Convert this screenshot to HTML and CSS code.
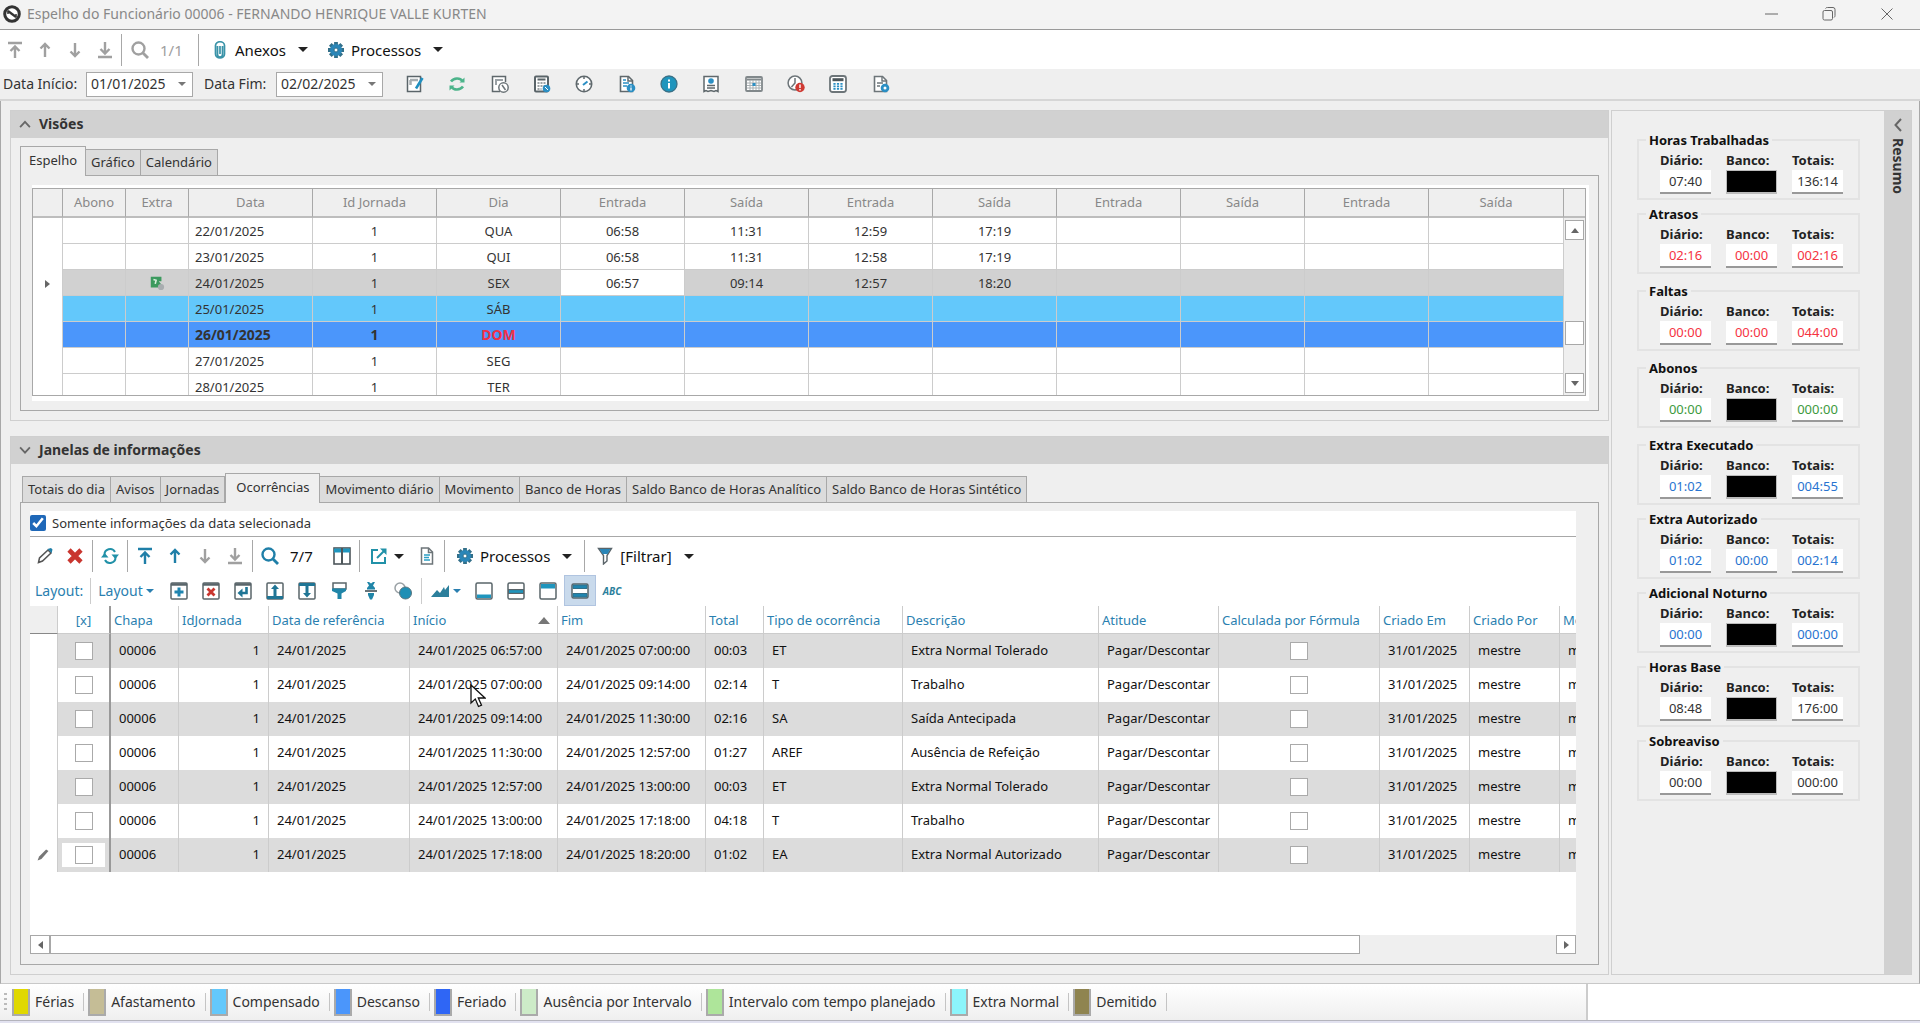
FILE: index.html
```html
<!DOCTYPE html>
<html lang="pt-BR">
<head>
    <meta charset="UTF-8">
    <meta name="viewport" content="width=device-width, initial-scale=1.0">
    <title>Espelho do Funcionário</title>
    <link rel="stylesheet" href="styles.css">
</head>
<body>
    <!-- Icon sprite -->
    <svg class="sprite" aria-hidden="true">
        <symbol id="i-logo" viewBox="0 0 18 18"><circle cx="9" cy="9" r="7.300" fill="#fff" stroke="#333" stroke-width="3"/><path d="M5 6l8 6" stroke="#333" stroke-width="2.200"/><path d="M5 5.500v3.500M13 9v3.500" stroke="#333" stroke-width="1.500"/></symbol>
        <symbol id="i-first" viewBox="0 0 18 18"><path d="M2 2h14M9 17V6M4.500 10L9 5.500l4.500 4.500" fill="none" stroke="currentColor" stroke-width="2.400"/></symbol>
        <symbol id="i-up" viewBox="0 0 18 18"><path d="M9 16V3M4.500 7.500L9 3l4.500 4.500" fill="none" stroke="currentColor" stroke-width="2.400"/></symbol>
        <symbol id="i-down" viewBox="0 0 18 18"><path d="M9 2v13M4.500 10.500L9 15l4.500-4.500" fill="none" stroke="currentColor" stroke-width="2.400"/></symbol>
        <symbol id="i-last" viewBox="0 0 18 18"><path d="M2 16h14M9 1v11M4.500 8L9 12.500 13.500 8" fill="none" stroke="currentColor" stroke-width="2.400"/></symbol>
        <symbol id="i-search" viewBox="0 0 18 18"><circle cx="7.500" cy="7.500" r="6" fill="none" stroke="currentColor" stroke-width="2.400"/><path d="M11.500 11.500L17 17" stroke="currentColor" stroke-width="2.800"/></symbol>
        <symbol id="i-clip" viewBox="0 0 18 18"><path d="M9 5v8M6.500 5v8.500a2.500 2.500 0 0 0 5 0V5M4.500 12V4.500a4.200 3.500 0 0 1 9 0V13a4.500 4 0 0 1-9 0z" fill="none" stroke="#3a93a8" stroke-width="1.700"/></symbol>
        <symbol id="i-gear" viewBox="0 0 18 18"><path d="M9 1v16M1 9h16M3.300 3.300l11.400 11.400M14.700 3.300L3.300 14.700" stroke="#33708a" stroke-width="3.800"/><circle cx="9" cy="9" r="6" fill="#2a86b8"/><circle cx="9" cy="9" r="2" fill="#fff" stroke="#33708a"/></symbol>
        <symbol id="i-note" viewBox="0 0 18 18"><path d="M1.500 1.500h13v15h-13z" fill="#fff" stroke="#5a6469" stroke-width="1.500"/><path d="M4 5h8M4.500 5v5" stroke="#a5acb0" stroke-width="2.500"/><path d="M16.500 3L10 13.500" stroke="#1f8fc0" stroke-width="2.600"/></symbol>
        <symbol id="i-sync" viewBox="0 0 18 18"><path d="M3 6.500c3-4 9-4 11.500-.5M15 11.500c-3 4-9 4-11.500.5" fill="none" stroke="#4db48b" stroke-width="2.600"/><path d="M16.500 2.500v5h-5zM1.500 15.500v-5h5z" fill="#4db48b"/></symbol>
        <symbol id="i-docclock" viewBox="0 0 18 18"><path d="M9 16.500H1.500v-15h13V7" fill="#fff" stroke="#5f686c" stroke-width="1.500"/><path d="M4 5h8M5 5v5" stroke="#9aa1a5" stroke-width="2"/><circle cx="12.500" cy="12.500" r="4.700" fill="#fff" stroke="#6d7579" stroke-width="1.500"/><path d="M11 10l3.500 5" stroke="#6d7579" stroke-width="1.500"/></symbol>
        <symbol id="i-calcsmall" viewBox="0 0 18 18"><rect x="2" y="1.500" width="13" height="15" rx="1" fill="#fff" stroke="#5a6469" stroke-width="2"/><path d="M4.500 4.500h8" stroke="#5a6469" stroke-width="2"/><path d="M4.500 8h8M4.500 11h8M4.500 14h4" stroke="#7d8589" stroke-width="1.300" stroke-dasharray="2 1"/><circle cx="13.500" cy="13.500" r="3.800" fill="#2b8fc4"/><path d="M12 12l3 3" stroke="#fff"/></symbol>
        <symbol id="i-clock" viewBox="0 0 18 18"><circle cx="9" cy="9" r="7.700" fill="#fff" stroke="#5f686c" stroke-width="1.600"/><path d="M9 2v2M9 14v2M2 9h2M14 9h2" stroke="#5f686c" stroke-width="1.500"/><path d="M8 10l4.500-3.500" stroke="#2b8fc4" stroke-width="2"/></symbol>
        <symbol id="i-docinfo" viewBox="0 0 18 18"><path d="M2.500 1.500h8l4 4v11h-12z" fill="#fff" stroke="#5f686c" stroke-width="1.600"/><path d="M10 1v5h5" fill="none" stroke="#5f686c" stroke-width="1.500"/><path d="M5 5h3M5 8h6M5 11h4" stroke="#2b8fc4" stroke-width="1.400"/><circle cx="13" cy="13" r="4.300" fill="#2b8fc4"/><path d="M13 10.500v1M13 12.500v3" stroke="#fff" stroke-width="1.300"/></symbol>
        <symbol id="i-info" viewBox="0 0 18 18"><circle cx="9" cy="9" r="8" fill="#1f95bd" stroke="#3b7187" stroke-width="1.300"/><path d="M9 4.500v2M9 8v5.500" stroke="#fff" stroke-width="2"/></symbol>
        <symbol id="i-badge" viewBox="0 0 18 18"><path d="M2 1.500h14v15l-2-1-2 1-3-1-3 1-2-1-2 1z" fill="#fff" stroke="#5f686c" stroke-width="1.500"/><circle cx="9" cy="6" r="2.800" fill="#2b8fc4"/><path d="M5 10.500h8M5 13h8" stroke="#5f686c" stroke-width="1.300"/></symbol>
        <symbol id="i-calendar" viewBox="0 0 18 18"><rect x="1" y="2" width="16" height="14" rx="1" fill="#fff" stroke="#81888b" stroke-width="1.800"/><path d="M2 4.500h14" stroke="#81888b" stroke-width="2"/><path d="M2 8h14M2 10.500h14M2 13h14M5 5v10M8 5v10M11 5v10M14 5v10" stroke="#aab0b3"/><path d="M7.500 8h3v3h-3z" fill="#2b8fc4"/></symbol>
        <symbol id="i-clockalert" viewBox="0 0 18 18"><circle cx="8" cy="8" r="6.900" fill="#fff" stroke="#6d7579" stroke-width="1.500"/><path d="M8 3v5l-3.500 4" fill="none" stroke="#6d7579" stroke-width="1.500"/><circle cx="13" cy="12.500" r="4.700" fill="#cf3a33"/><path d="M13 9.500v3.500M13 14v1.500" stroke="#fff" stroke-width="1.400"/></symbol>
        <symbol id="i-calc" viewBox="0 0 18 18"><rect x="1" y="1" width="16" height="16" rx="2.500" fill="#fff" stroke="#6d7579" stroke-width="1.800"/><path d="M3.500 4.700h11" stroke="#4d565a" stroke-width="3"/><path d="M5.500 8v7M9 8v7M12.500 8v7" stroke="#2b8fc4" stroke-width="2.200" stroke-dasharray="1.800 .7"/></symbol>
        <symbol id="i-docuser" viewBox="0 0 18 18"><path d="M2.500 1.500h8l4 4v11h-12z" fill="#fff" stroke="#6d7579" stroke-width="1.600"/><path d="M10 1v5h5" fill="none" stroke="#6d7579" stroke-width="1.400"/><path d="M5 8h6M5 11h3" stroke="#6d7579" stroke-width="1.400"/><circle cx="13" cy="13" r="4.300" fill="#2b8fc4"/><circle cx="13" cy="13" r="1.500" fill="#fff"/></symbol>
        <symbol id="i-pencil" viewBox="0 0 18 18"><path d="M2.500 15.500l1-4.500 8.500-8 3 3-8.500 8z" fill="#fff" stroke="#555" stroke-width="1.500"/><path d="M11.500 2l3.500-1 1.500 1.500-.8 3.500z" fill="#1f7fa8"/></symbol>
        <symbol id="i-delete" viewBox="0 0 18 18"><path d="M3 3l12 12M15 3L3 15" stroke="#c9362f" stroke-width="4.600"/></symbol>
        <symbol id="i-refresh" viewBox="0 0 18 18"><path d="M3.500 8a5.600 5.600 0 0 1 10.500-3M14.500 10a5.600 5.600 0 0 1-10.500 3" fill="none" stroke="#2191a8" stroke-width="2"/><path d="M10.500 7.500H18l-3.700 4.500zM0 10.500h7.500L3.700 6z" fill="#2191a8"/></symbol>
        <symbol id="i-columns" viewBox="0 0 18 18"><rect x="1" y="1" width="16" height="16" fill="#fff" stroke="#4d565a" stroke-width="1.600"/><path d="M1 3.500h16" stroke="#1f95bd" stroke-width="4"/><path d="M9 1v16" stroke="#4d565a" stroke-width="2"/></symbol>
        <symbol id="i-export" viewBox="0 0 18 18"><path d="M8 3H2v13h13v-6" fill="none" stroke="#2191a8" stroke-width="2"/><path d="M7 11l7-7" stroke="#2191a8" stroke-width="2"/><path d="M10 1.500h6.500V8z" fill="#2191a8"/></symbol>
        <symbol id="i-page" viewBox="0 0 18 18"><path d="M3.500 1h7l4 4v12h-11z" fill="#fff" stroke="#6d7579" stroke-width="1.500"/><path d="M10.500 1v4.500h4" fill="none" stroke="#6d7579" stroke-width="1.500"/><path d="M6 8h6M6 10.500h5M6 13h6" stroke="#2b9fc4" stroke-width="1.400"/></symbol>
        <symbol id="i-funnel" viewBox="0 0 18 18"><path d="M2.500 1.500h13L11 8.500V14l-3.500 3V8.500z" fill="#fff" stroke="#5a6469" stroke-width="1.400"/><path d="M3.500 2h11l-3 5h-5z" fill="#2a86b8"/></symbol>
        <symbol id="i-addwin" viewBox="0 0 18 18"><use href="#i-window"/><path d="M9 5.500v9M4.500 10h9" stroke="#1f85b0" stroke-width="3"/></symbol>
        <symbol id="i-window" viewBox="0 0 18 18"><rect x="1" y="1" width="16" height="16" rx="1" fill="#fff" stroke="#59656a" stroke-width="1.500"/><path d="M1 2.500h16" stroke="#59656a" stroke-width="2.500"/></symbol>
        <symbol id="i-delwin" viewBox="0 0 18 18"><use href="#i-window"/><path d="M5.500 6.500l7 7M12.500 6.500l-7 7" stroke="#c9362f" stroke-width="2.800"/></symbol>
        <symbol id="i-enterwin" viewBox="0 0 18 18"><use href="#i-window"/><path d="M12.500 5v6H7" fill="none" stroke="#1f7595" stroke-width="2.600"/><path d="M3.500 11l5-4.500v9z" fill="#1f7595"/></symbol>
        <symbol id="i-upwin" viewBox="0 0 18 18"><rect x="1" y="1" width="16" height="16" rx="1" fill="#fff" stroke="#59656a" stroke-width="1.500"/><path d="M1 15.500h16" stroke="#1f7595" stroke-width="3"/><path d="M9 2.500l4 4.500h-2.500v7h-3V7H5z" fill="#1f7595"/></symbol>
        <symbol id="i-downwin" viewBox="0 0 18 18"><rect x="1" y="1" width="16" height="16" rx="1" fill="#fff" stroke="#59656a" stroke-width="1.500"/><path d="M1 2.500h16" stroke="#1f7595" stroke-width="3"/><path d="M9 15.500L5 11h2.500V4h3v7H13z" fill="#1f7595"/></symbol>
        <symbol id="i-pin" viewBox="0 0 18 18"><path d="M3 1h13v6H3z" fill="#fff" stroke="#59656a" stroke-width="1.500"/><path d="M2 6.500h14V9L11.500 11.500V17h-4v-5.500L2 9z" fill="#1f85a8"/></symbol>
        <symbol id="i-expand" viewBox="0 0 18 18"><path d="M3 9h12" stroke="#59656a" stroke-width="1.800"/><path d="M5 0h2l2 1.500L11 0h2l-2 3.500L13 6v1.500H5V6l2-2.500zM6 11h6v2l-2 4.500H8L6 13z" fill="#1f85a8"/></symbol>
        <symbol id="i-circles" viewBox="0 0 18 18"><circle cx="6" cy="6" r="5" fill="#fff" stroke="#9aa1a5" stroke-width="1.500"/><circle cx="11.500" cy="11" r="6" fill="#1f8fb5" stroke="#59757f"/></symbol>
        <symbol id="i-chart" viewBox="0 0 18 18"><path d="M0 15l6-7 3 3 4-6 1 3 4-5v12z" fill="#2c7f9c"/></symbol>
        <symbol id="i-foot" viewBox="0 0 18 18"><rect x="1" y="1" width="16" height="16" rx="1.500" fill="#fff" stroke="#59656a" stroke-width="1.500"/><path d="M2 12.500h14V16H2z" fill="#1f95bd"/></symbol>
        <symbol id="i-middle" viewBox="0 0 18 18"><rect x="1" y="1" width="16" height="16" rx="1.500" fill="#fff" stroke="#59656a" stroke-width="1.500"/><path d="M1 9.500h16" stroke="#59656a" stroke-width="5"/><path d="M2 9.500h14" stroke="#1f95bd" stroke-width="2.600"/></symbol>
        <symbol id="i-head" viewBox="0 0 18 18"><rect x="1" y="1" width="16" height="16" rx="1.500" fill="#fff" stroke="#59656a" stroke-width="1.500"/><path d="M2 2h14v4.500H2z" fill="#1f95bd"/></symbol>
        <symbol id="i-both" viewBox="0 0 18 18"><rect x="1" y="2" width="16" height="14" rx="1.500" fill="#fff" stroke="#59656a" stroke-width="1.500"/><path d="M2 3h14v3.500H2zM2 11.500h14V15H2z" fill="#1f85b0" stroke="#33708a"/></symbol>
        <symbol id="i-extra" viewBox="0 0 18 18"><path d="M2 2h12v5h-3l4 5v2H2z" fill="#3b9a5e"/><path d="M5 5l3 1-1 4" stroke="#d9f0df" stroke-width="1.800" fill="none"/><circle cx="13.500" cy="13.500" r="3.500" fill="#a8adb0"/></symbol>
        <symbol id="i-editrow" viewBox="0 0 18 18"><path d="M2 16l2-5L13 2l3 2L7 14z" fill="#777"/></symbol>
        <symbol id="i-chevup" viewBox="0 0 18 18"><path d="M3.500 12.500L9 6.500l5.500 6" fill="none" stroke="#666" stroke-width="2"/></symbol>
        <symbol id="i-chevdown" viewBox="0 0 18 18"><path d="M3.500 6L9 12l5.500-6" fill="none" stroke="#666" stroke-width="2"/></symbol>
        <symbol id="i-chevleft" viewBox="0 0 18 18"><path d="M12 3L6.500 9l5.500 6" fill="none" stroke="#666" stroke-width="2"/></symbol>
        <symbol id="i-min" viewBox="0 0 18 18"><path d="M3 9h13" stroke="#666"/></symbol>
        <symbol id="i-restore" viewBox="0 0 18 18"><rect x="3" y="5.500" width="9.500" height="9.500" rx="1.500" fill="none" stroke="#666"/><path d="M5.500 3.500c.5-.8 1-1 2-1H13a2 2 0 0 1 2 2v6c0 1-.3 1.500-1 2" fill="none" stroke="#666"/></symbol>
        <symbol id="i-close" viewBox="0 0 18 18"><path d="M3.500 3.500l11 11M14.500 3.500l-11 11" stroke="#666"/></symbol>
        <symbol id="i-pointer" viewBox="0 0 16 24"><path d="M1 1v18l4.300-4 3.200 7.500 3-1.300-3.200-7.200H15z" fill="#fff" stroke="#111" stroke-width="1.300"/></symbol>
    </svg>

    <header class="titlebar">
        <svg class="icon"><use href="#i-logo"/></svg>
        <h1>Espelho do Funcionário 00006 - FERNANDO HENRIQUE VALLE KURTEN</h1>
        <div class="window-buttons">
            <button aria-label="Minimizar"><svg class="icon"><use href="#i-min"/></svg></button>
            <button aria-label="Restaurar"><svg class="icon"><use href="#i-restore"/></svg></button>
            <button aria-label="Fechar"><svg class="icon"><use href="#i-close"/></svg></button>
        </div>
    </header>

    <div class="toolbar main-toolbar">
        <button class="tool off" aria-label="Primeiro"><svg class="icon"><use href="#i-first"/></svg></button>
        <button class="tool off" aria-label="Anterior"><svg class="icon"><use href="#i-up"/></svg></button>
        <button class="tool off" aria-label="Próximo"><svg class="icon"><use href="#i-down"/></svg></button>
        <button class="tool off" aria-label="Último"><svg class="icon"><use href="#i-last"/></svg></button>
        <span class="sep"></span>
        <button class="tool off" aria-label="Pesquisar"><svg class="icon"><use href="#i-search"/></svg></button>
        <span class="counter off">1/1</span>
        <span class="sep"></span>
        <button class="tool-text"><svg class="icon"><use href="#i-clip"/></svg>Anexos<i class="caret"></i></button>
        <button class="tool-text"><svg class="icon"><use href="#i-gear"/></svg>Processos<i class="caret"></i></button>
    </div>

    <div class="date-row">
        <label for="dataInicio">Data Início:</label>
        <div class="date-box">
            <input type="text" id="dataInicio" value="01/01/2025">
            <button aria-label="Abrir calendário"><i class="caret small"></i></button>
        </div>
        <label for="dataFim">Data Fim:</label>
        <div class="date-box">
            <input type="text" id="dataFim" value="02/02/2025">
            <button aria-label="Abrir calendário"><i class="caret small"></i></button>
        </div>
        <div class="actions" id="actions"></div>
    </div>

    <main>
        <div class="workspace">
            <section class="panel">
                <h2><svg class="icon"><use href="#i-chevup"/></svg>Visões</h2>
                <div class="panel-body">
                    <div class="tabs">
                        <button class="tab active">Espelho</button>
                        <button class="tab">Gráfico</button>
                        <button class="tab">Calendário</button>
                    </div>
                    <div class="tab-box">
                        <div class="mirror">
                            <div class="mirror-frame">
                                <table class="mirror-table">
                                    <colgroup>
                                        <col class="c-mark"><col class="c-flag"><col class="c-flag">
                                        <col span="10" class="c-time"><col>
                                    </colgroup>
                                    <thead>
                                        <tr>
                                            <th></th><th>Abono</th><th>Extra</th><th>Data</th><th>Id Jornada</th><th>Dia</th>
                                            <th>Entrada</th><th>Saída</th><th>Entrada</th><th>Saída</th>
                                            <th>Entrada</th><th>Saída</th><th>Entrada</th><th>Saída</th>
                                        </tr>
                                    </thead>
                                    <tbody id="mirrorRows"></tbody>
                                </table>
                                <div class="vscroll">
                                    <div class="vscroll-head"></div>
                                    <button aria-label="Rolar para cima"><i class="arrow to-top"></i></button>
                                    <div class="vscroll-track"><div class="vscroll-thumb"></div></div>
                                    <button aria-label="Rolar para baixo"><i class="arrow to-bottom"></i></button>
                                </div>
                            </div>
                        </div>
                    </div>
                </div>
            </section>

            <section class="panel info-panel">
                <h2><svg class="icon"><use href="#i-chevdown"/></svg>Janelas de informações</h2>
                <div class="panel-body">
                    <div class="tabs">
                        <button class="tab">Totais do dia</button>
                        <button class="tab">Avisos</button>
                        <button class="tab">Jornadas</button>
                        <button class="tab active">Ocorrências</button>
                        <button class="tab">Movimento diário</button>
                        <button class="tab">Movimento</button>
                        <button class="tab">Banco de Horas</button>
                        <button class="tab">Saldo Banco de Horas Analítico</button>
                        <button class="tab">Saldo Banco de Horas Sintético</button>
                    </div>
                    <div class="tab-box">
                        <div class="events">
                            <div class="only-date">
                                <input type="checkbox" id="onlyDate" class="check-blue" checked>
                                <label for="onlyDate">Somente informações da data selecionada</label>
                            </div>
                            <div class="toolbar">
                                <button class="tool" aria-label="Editar"><svg class="icon"><use href="#i-pencil"/></svg></button>
                                <button class="tool" aria-label="Excluir"><svg class="icon"><use href="#i-delete"/></svg></button>
                                <span class="sep"></span>
                                <button class="tool" aria-label="Atualizar"><svg class="icon"><use href="#i-refresh"/></svg></button>
                                <span class="sep"></span>
                                <button class="tool" aria-label="Primeiro"><svg class="icon"><use href="#i-first"/></svg></button>
                                <button class="tool" aria-label="Anterior"><svg class="icon"><use href="#i-up"/></svg></button>
                                <button class="tool off" aria-label="Próximo"><svg class="icon"><use href="#i-down"/></svg></button>
                                <button class="tool off" aria-label="Último"><svg class="icon"><use href="#i-last"/></svg></button>
                                <span class="sep"></span>
                                <button class="tool" aria-label="Pesquisar"><svg class="icon"><use href="#i-search"/></svg></button>
                                <span class="counter">7/7</span>
                                <button class="tool" aria-label="Colunas"><svg class="icon"><use href="#i-columns"/></svg></button>
                                <span class="sep"></span>
                                <button class="tool-drop" aria-label="Exportar"><svg class="icon"><use href="#i-export"/></svg><i class="caret"></i></button>
                                <button class="tool" aria-label="Relatório"><svg class="icon"><use href="#i-page"/></svg></button>
                                <span class="sep"></span>
                                <button class="tool-text"><svg class="icon"><use href="#i-gear"/></svg>Processos<i class="caret"></i></button>
                                <span class="sep"></span>
                                <button class="tool-text"><svg class="icon"><use href="#i-funnel"/></svg>[Filtrar]<i class="caret"></i></button>
                            </div>
                            <div class="toolbar layout-bar">
                                <span class="layout-label">Layout:</span>
                                <span class="sep"></span>
                                <button class="layout-menu">Layout<i class="caret small"></i></button>
                                <button class="tool" aria-label="Novo layout"><svg class="icon"><use href="#i-addwin"/></svg></button>
                                <button class="tool" aria-label="Excluir layout"><svg class="icon"><use href="#i-delwin"/></svg></button>
                                <button class="tool" aria-label="Restaurar layout"><svg class="icon"><use href="#i-enterwin"/></svg></button>
                                <button class="tool" aria-label="Exportar layout"><svg class="icon"><use href="#i-upwin"/></svg></button>
                                <button class="tool" aria-label="Importar layout"><svg class="icon"><use href="#i-downwin"/></svg></button>
                                <button class="tool" aria-label="Fixar"><svg class="icon"><use href="#i-pin"/></svg></button>
                                <button class="tool" aria-label="Agrupar"><svg class="icon"><use href="#i-expand"/></svg></button>
                                <button class="tool" aria-label="Formatar"><svg class="icon"><use href="#i-circles"/></svg></button>
                                <span class="sep"></span>
                                <button class="tool-drop" aria-label="Gráfico"><svg class="icon"><use href="#i-chart"/></svg><i class="caret small"></i></button>
                                <button class="tool" aria-label="Rodapé"><svg class="icon"><use href="#i-foot"/></svg></button>
                                <button class="tool" aria-label="Rodapé de grupo"><svg class="icon"><use href="#i-middle"/></svg></button>
                                <button class="tool" aria-label="Cabeçalho"><svg class="icon"><use href="#i-head"/></svg></button>
                                <button class="tool selected" aria-label="Linhas alternadas"><svg class="icon"><use href="#i-both"/></svg></button>
                                <button class="tool abc">ABC</button>
                            </div>
                            <div class="events-scroll">
                                <table class="events-table">
                                    <colgroup>
                                        <col class="e-mark"><col class="e-check"><col class="e-chapa"><col class="e-id">
                                        <col class="e-ref"><col class="e-date"><col class="e-date"><col class="e-total">
                                        <col class="e-tipo"><col class="e-desc"><col class="e-atitude"><col class="e-calc">
                                        <col class="e-criado"><col class="e-criado"><col>
                                    </colgroup>
                                    <thead>
                                        <tr>
                                            <th class="mark"></th><th class="center">[x]</th><th>Chapa</th><th>IdJornada</th>
                                            <th>Data de referência</th><th class="sorted">Início</th><th>Fim</th><th>Total</th>
                                            <th>Tipo de ocorrência</th><th>Descrição</th><th>Atitude</th>
                                            <th>Calculada por Fórmula</th><th>Criado Em</th><th>Criado Por</th><th>Modificado</th>
                                        </tr>
                                    </thead>
                                    <tbody id="eventRows"></tbody>
                                </table>
                            </div>
                            <div class="hscroll">
                                <button aria-label="Rolar para a esquerda"><i class="arrow to-left"></i></button>
                                <div class="hscroll-track"><div class="hscroll-thumb"></div></div>
                                <button aria-label="Rolar para a direita"><i class="arrow to-right"></i></button>
                            </div>
                        </div>
                    </div>
                </div>
            </section>
        </div>

        <aside class="summary">
            <div class="summary-groups" id="summaryGroups"></div>
            <div class="summary-side">
                <svg class="icon"><use href="#i-chevleft"/></svg>
                <h2>Resumo</h2>
            </div>
        </aside>
    </main>

    <footer class="legend">
        <div class="legend-items">
            <span class="grip"></span>
            <span class="legend-item"><i class="swatch ferias"></i>Férias</span>
            <span class="legend-item"><i class="swatch afastamento"></i>Afastamento</span>
            <span class="legend-item"><i class="swatch compensado"></i>Compensado</span>
            <span class="legend-item"><i class="swatch descanso"></i>Descanso</span>
            <span class="legend-item"><i class="swatch feriado"></i>Feriado</span>
            <span class="legend-item"><i class="swatch ausencia"></i>Ausência por Intervalo</span>
            <span class="legend-item"><i class="swatch intervalo"></i>Intervalo com tempo planejado</span>
            <span class="legend-item"><i class="swatch extra"></i>Extra Normal</span>
            <span class="legend-item"><i class="swatch demitido"></i>Demitido</span>
        </div>
    </footer>

    <script>
        const actions = [
            ['note', 'Editar'], ['sync', 'Recalcular'], ['docclock', 'Horários'], ['calcsmall', 'Cálculo'],
            ['clock', 'Batidas'], ['docinfo', 'Ocorrências'], ['info', 'Informações'], ['badge', 'Funcionário'],
            ['calendar', 'Calendário'], ['clockalert', 'Alertas'], ['calc', 'Calculadora'], ['docuser', 'Relatório']
        ];

        const days = [
            { date: '22/01/2025', day: 'QUA', times: ['06:58', '11:31', '12:59', '17:19'] },
            { date: '23/01/2025', day: 'QUI', times: ['06:58', '11:31', '12:58', '17:19'] },
            { date: '24/01/2025', day: 'SEX', times: ['06:57', '09:14', '12:57', '18:20'], type: 'current' },
            { date: '25/01/2025', day: 'SÁB', times: [], type: 'saturday' },
            { date: '26/01/2025', day: 'DOM', times: [], type: 'sunday' },
            { date: '27/01/2025', day: 'SEG', times: [] },
            { date: '28/01/2025', day: 'TER', times: [] }
        ];

        const events = [
            ['06:57:00', '07:00:00', '00:03', 'ET', 'Extra Normal Tolerado'],
            ['07:00:00', '09:14:00', '02:14', 'T', 'Trabalho'],
            ['09:14:00', '11:30:00', '02:16', 'SA', 'Saída Antecipada'],
            ['11:30:00', '12:57:00', '01:27', 'AREF', 'Ausência de Refeição'],
            ['12:57:00', '13:00:00', '00:03', 'ET', 'Extra Normal Tolerado'],
            ['13:00:00', '17:18:00', '04:18', 'T', 'Trabalho'],
            ['17:18:00', '18:20:00', '01:02', 'EA', 'Extra Normal Autorizado']
        ];

        // A null value is a field with nothing to show
        const summary = [
            { title: 'Horas Trabalhadas', values: ['07:40', null, '136:14'], color: 'dark' },
            { title: 'Atrasos', values: ['02:16', '00:00', '002:16'], color: 'red', roomy: true },
            { title: 'Faltas', values: ['00:00', '00:00', '044:00'], color: 'red', roomy: true },
            { title: 'Abonos', values: ['00:00', null, '000:00'], color: 'green', roomy: true },
            { title: 'Extra Executado', values: ['01:02', null, '004:55'], color: 'blue' },
            { title: 'Extra Autorizado', values: ['01:02', '00:00', '002:14'], color: 'blue' },
            { title: 'Adicional Noturno', values: ['00:00', null, '000:00'], color: 'blue' },
            { title: 'Horas Base', values: ['08:48', null, '176:00'], color: 'dark' },
            { title: 'Sobreaviso', values: ['00:00', null, '000:00'], color: 'dark' }
        ];

        const icon = name => `<svg class="icon"><use href="#i-${name}"/></svg>`;

        document.getElementById('actions').innerHTML = actions.map(([name, label]) =>
            `<button aria-label="${label}">${icon(name)}</button>`).join('');

        // Mirror rows
        document.getElementById('mirrorRows').innerHTML = days.map(d => {
            const current = d.type === 'current';
            let cells = '';
            for (let i = 0; i < 8; i++) {
                cells += `<td${current && i === 0 ? ' class="editing"' : ''}>${d.times[i] || ''}</td>`;
            }
            return `
                <tr class="${d.type || ''}">
                    <td class="mark">${current ? '<i class="arrow to-right"></i>' : ''}</td>
                    <td></td>
                    <td>${current ? icon('extra') : ''}</td>
                    <td class="date">${d.date}</td>
                    <td>1</td>
                    <td class="day">${d.day}</td>
                    ${cells}
                </tr>`;
        }).join('');

        // Event rows
        document.getElementById('eventRows').innerHTML = events.map((e, i) => {
            const last = i === events.length - 1;
            return `
                <tr>
                    <td class="mark">${last ? icon('editrow') : ''}</td>
                    <td class="pick"><span class="${last ? 'focus' : ''}"><input type="checkbox" class="check" aria-label="Selecionar linha ${i + 1}"></span></td>
                    <td>00006</td>
                    <td class="num">1</td>
                    <td>24/01/2025</td>
                    <td>24/01/2025 ${e[0]}${i === 1 ? '<svg class="pointer"><use href="#i-pointer"/></svg>' : ''}</td>
                    <td>24/01/2025 ${e[1]}</td>
                    <td>${e[2]}</td>
                    <td>${e[3]}</td>
                    <td>${e[4]}</td>
                    <td>Pagar/Descontar</td>
                    <td class="center"><input type="checkbox" class="check" aria-label="Calculada por fórmula ${i + 1}"></td>
                    <td>31/01/2025</td>
                    <td>mestre</td>
                    <td>mestre</td>
                </tr>`;
        }).join('');

        // Summary groups
        const fields = ['Diário:', 'Banco:', 'Totais:'];
        document.getElementById('summaryGroups').innerHTML = summary.map((g, n) => `
            <fieldset class="group ${g.color}${g.roomy ? ' roomy' : ''}">
                <legend>${g.title}</legend>
                ${g.values.map((v, i) => `
                    <div class="field">
                        <label for="f${n}${i}">${fields[i]}</label>
                        <input type="text" id="f${n}${i}" value="${v || ''}"${v ? '' : ' class="blank"'} readonly>
                    </div>`).join('')}
            </fieldset>`).join('');
    </script>
</body>
</html>
```
FILE: styles.css
```css
:root {
    --bg: #efefef;
    --header: #d1d1d1;
    --line: #a8a8a8;
    --soft-line: #cfcfcf;
    --text: #333;
    --blue: #2a7fb0;
}

* {
    margin: 0;
    padding: 0;
    box-sizing: border-box;
}

body {
    display: flex;
    flex-direction: column;
    height: 100vh;
    overflow: hidden;
    background-color: var(--bg);
    border-bottom: 2px solid #e2e2f0;
    color: var(--text);
    font-family: "Noto Sans", "Open Sans", sans-serif;
    font-size: 13px;
    line-height: 16px;
}

button, input {
    font: inherit;
    color: inherit;
}

button {
    display: flex;
    align-items: center;
    justify-content: center;
    background: none;
    border: none;
    white-space: nowrap;
}

.sprite {
    display: none;
}

.icon {
    width: 18px;
    height: 18px;
    flex: none;
    display: block;
}

/* Carets and arrows */
.caret {
    border: 5px solid transparent;
    border-top-color: #222;
    border-bottom: none;
}

.caret.small {
    border-width: 4px;
    border-bottom: none;
}

.layout-bar .caret {
    border-top-color: var(--blue);
}

.arrow {
    display: inline-block;
    border: 4px solid transparent;
}

.arrow.to-top { border-bottom: 5px solid #666; border-top: none; }
.arrow.to-bottom { border-top: 5px solid #666; border-bottom: none; }
.arrow.to-left { border-right: 5px solid #666; border-left: none; }
.arrow.to-right { border-left: 5px solid #666; border-right: none; }

/* Title bar */
.titlebar {
    display: flex;
    align-items: center;
    gap: 6px;
    height: 30px;
    padding: 0 4px 2px 3px;
    background-color: #f3f3f3;
    border-bottom: 1px solid #999;
}

.titlebar h1 {
    flex: 1;
    color: #888;
    font-size: 14px;
    font-weight: normal;
}

.window-buttons {
    display: flex;
}

.window-buttons button {
    width: 58px;
    height: 26px;
}

/* Toolbars */
.toolbar {
    display: flex;
    align-items: center;
    height: 38px;
    background-color: #fff;
    color: #111;
    font-size: 15px;
}

.main-toolbar {
    height: 39px;
    flex: none;
}

.tool {
    width: 30px;
    height: 30px;
    color: #1f7fa8;
}

.off, .tool.off {
    color: #a0a0a0;
}

.sep {
    width: 1px;
    height: 32px;
    margin: 0 2px;
    background-color: var(--line);
}

.main-toolbar .sep {
    margin: 0 3px 0 1px;
}

.counter {
    width: 42px;
    padding-left: 5px;
}

.tool-text {
    height: 30px;
    padding: 0 10px 0 9px;
    gap: 6px;
}

.tool-text .caret {
    margin-left: 6px;
}

.tool-drop {
    width: 50px;
    height: 30px;
    gap: 6px;
}

.layout-bar {
    height: 31px;
    color: var(--blue);
}

.layout-bar .sep {
    height: 26px;
    background-color: #ccc;
}

.layout-bar .tool {
    width: 32px;
    height: 31px;
}

.layout-bar .tool-drop {
    width: 44px;
    gap: 4px;
}

.layout-bar .tool.selected {
    background-color: #c9daec;
    border: 1px solid #b0c4e0;
}

.layout-bar .tool.abc {
    color: #2c7f9c;
    font-size: 10px;
    font-style: italic;
    font-weight: bold;
}

.layout-label {
    width: 58px;
    padding-left: 5px;
    font-size: 14px;
}

.layout-menu {
    width: 70px;
    padding-right: 4px;
    gap: 3px;
    font-size: 14px;
}

/* Date row */
.date-row {
    display: flex;
    align-items: center;
    flex: none;
    height: 32px;
    padding-left: 3px;
    border-bottom: 2px solid #d6d6d6;
    font-size: 14px;
}

.date-row label {
    width: 83px;
}

.date-box + label {
    width: 72px;
}

.date-box {
    display: flex;
    width: 107px;
    height: 25px;
    margin-right: 11px;
    background-color: #fff;
    border: 1px solid var(--line);
}

.date-box input {
    width: 84px;
    padding-left: 4px;
    border: none;
    outline: none;
}

.date-box button {
    width: 21px;
}

.date-box .caret {
    border-top-color: #777;
}

.actions {
    display: grid;
    grid-template-columns: repeat(12, 1fr);
    width: 508px;
}

/* Main area */
main {
    flex: 1;
    min-height: 0;
    display: flex;
    gap: 2px;
    padding: 9px 7px 8px 9px;
    border-left: 1px solid var(--line);
    border-right: 1px solid var(--line);
    border-bottom: 1px solid #c8c8c8;
}

.workspace {
    flex: 1;
    min-width: 0;
    display: flex;
    flex-direction: column;
    gap: 15px;
}

.panel {
    border: 1px solid var(--soft-line);
}

.panel h2 {
    display: flex;
    align-items: center;
    gap: 6px;
    height: 27px;
    padding: 0 0 2px 6px;
    background-color: var(--header);
    font-size: 14px;
}

.panel h2 .icon {
    width: 16px;
    height: 16px;
}

.panel-body {
    padding: 8px 9px 9px;
}

.tabs {
    display: flex;
    align-items: flex-end;
    height: 29px;
}

.tab {
    height: 26px;
    padding: 0 5px 2px;
    background-color: #dcdcdc;
    border: 1px solid var(--line);
    border-bottom: none;
}

.tab + .tab {
    border-left: none;
}

.tab.active {
    height: 30px;
    margin-bottom: -1px;
    padding: 0 8px 4px;
    background-color: var(--bg);
    z-index: 1;
}

.tab + .tab.active {
    border-left: 1px solid var(--line);
    padding: 0 10px 4px;
}

.tab-box {
    padding: 9px 9px 9px 11px;
    border: 1px solid var(--line);
}

/* Mirror table */
.mirror {
    padding: 3px 3px 5px 0;
    background-color: #fff;
}

.mirror-frame {
    display: flex;
    height: 208px;
    overflow: hidden;
    border: 1px solid var(--line);
}

table {
    border-collapse: separate;
    border-spacing: 0;
    table-layout: fixed;
}

.mirror-table {
    flex: 1;
    width: 100%;
    height: max-content;
}

.c-mark { width: 30px; }
.c-flag { width: 63px; }
.c-time { width: 124px; }

.mirror-table th {
    height: 29px;
    padding-bottom: 2px;
    background-color: var(--bg);
    border-right: 1px solid var(--line);
    border-bottom: 2px solid #bdbdbd;
    color: #888;
    font-weight: normal;
}

.mirror-table td {
    height: 26px;
    background-color: #fff;
    border-right: 1px solid #ccc;
    border-bottom: 1px solid #ccc;
    text-align: center;
}

.mirror-table td.mark {
    border-bottom: none;
}

.mirror-table td.date {
    padding-left: 6px;
    text-align: left;
}

.mirror-table td .icon {
    width: 16px;
    height: 16px;
    margin: 0 auto;
}

.current td:not(.mark):not(.editing) { background-color: var(--header); }
.saturday td:not(.mark) { background-color: #63c8fb; }
.sunday td:not(.mark) { background-color: #4b96fb; font-size: 14px; font-weight: bold; }
.sunday td.day { color: #f03048; }

.vscroll {
    display: flex;
    flex-direction: column;
    align-items: center;
    width: 21px;
    padding-bottom: 2px;
    background-color: var(--bg);
}

.vscroll-head {
    width: 100%;
    height: 29px;
    margin-bottom: 2px;
    border-bottom: 2px solid #bdbdbd;
}

.vscroll button {
    width: 19px;
    height: 20px;
    background-color: #fff;
    border: 1px solid var(--line);
}

.vscroll-track {
    flex: 1;
    display: flex;
    flex-direction: column;
    justify-content: flex-end;
    padding-bottom: 28px;
}

.vscroll-thumb {
    width: 19px;
    height: 24px;
    background-color: #fff;
    border: 1px solid var(--line);
}

/* Events */
.info-panel, .info-panel .panel-body, .info-panel .tab-box {
    flex: 1;
    min-height: 0;
    display: flex;
    flex-direction: column;
}

.info-panel .panel-body {
    padding-top: 9px;
}

.info-panel .tabs {
    padding-left: 2px;
}

.info-panel .tab-box {
    padding: 8px 22px 10px 9px;
}

.events {
    flex: 1;
    min-height: 0;
    display: flex;
    flex-direction: column;
    background-color: #fff;
}

.only-date {
    display: flex;
    align-items: center;
    gap: 6px;
    height: 26px;
    padding-bottom: 2px;
    border-bottom: 1px solid var(--line);
}

.check-blue {
    width: 16px;
    height: 16px;
    accent-color: #1f68b8;
}

.events-scroll {
    flex: 1;
    min-height: 0;
    overflow: hidden;
}

.events-table {
    width: 1650px;
}

.e-mark { width: 28px; }
.e-check { width: 53px; }
.e-chapa { width: 68px; }
.e-id { width: 90px; }
.e-ref { width: 141px; }
.e-date { width: 148px; }
.e-total { width: 58px; }
.e-tipo { width: 139px; }
.e-desc { width: 196px; }
.e-atitude { width: 120px; }
.e-calc { width: 161px; }
.e-criado { width: 90px; }

.events-table th {
    height: 28px;
    padding: 0 3px;
    border-right: 1px solid #ccc;
    border-bottom: 1px solid #ccc;
    color: var(--blue);
    font-weight: normal;
    text-align: left;
    white-space: nowrap;
}

.events-table th.mark {
    background-color: var(--bg);
    border-bottom-color: #888;
}

.events-table th.sorted::after {
    content: "";
    float: right;
    margin: 5px 4px 0 0;
    border: 6px solid transparent;
    border-top: none;
    border-bottom: 7px solid #777;
}

.events-table td {
    position: relative;
    height: 34px;
    padding: 0 8px 2px;
    border-right: 1px solid #ccc;
    color: #111;
    white-space: nowrap;
}

.events-table tbody tr:nth-child(odd) td:not(.mark) {
    background-color: #dcdcdc;
}

.events-table th.center, .events-table td.center, .events-table td.pick {
    padding: 0;
    text-align: center;
}

.events-table tbody tr:nth-child(n) td.pick, .events-table th:nth-child(2) {
    border-right: 2px solid #999;
}

.events-table td.mark {
    padding: 0 6px;
}

.events-table td.mark .icon {
    width: 14px;
    height: 14px;
}

.events-table td.num {
    text-align: right;
}

.pick span {
    display: block;
    padding: 3px 0;
    margin: 0 4px;
}

.pick span.focus {
    background-color: #fff;
}

.check {
    display: block;
    width: 18px;
    height: 18px;
    margin: 0 auto;
    appearance: none;
    background-color: #fff;
    border: 1px solid #aaa;
}

/* Mouse pointer over the second row */
.pointer {
    position: absolute;
    left: 60px;
    top: 16px;
    width: 16px;
    height: 24px;
    z-index: 1;
}

.hscroll {
    display: flex;
    height: 19px;
    background-color: var(--bg);
}

.hscroll button {
    width: 20px;
    background-color: #fff;
    border: 1px solid var(--line);
}

.hscroll-track {
    flex: 1;
}

.hscroll-thumb {
    width: 87%;
    height: 100%;
    background-color: #fff;
    border: 1px solid var(--line);
}

/* Summary */
.summary {
    display: flex;
    width: 301px;
    border: 1px solid var(--soft-line);
}

.summary-groups {
    flex: 1;
    padding: 21px 24px 0 25px;
}

.group {
    display: flex;
    gap: 15px;
    height: 68px;
    margin-bottom: 6px;
    padding: 4px 0 0 21px;
    border: 2px solid #e3e3e3;
}

.group.roomy {
    margin-bottom: 9px;
}

.group legend {
    margin-left: -14px;
    padding: 0 3px;
    color: #111;
    font-weight: bold;
}

.field {
    width: 51px;
}

.field label {
    display: block;
    height: 18px;
    color: #222;
    font-weight: bold;
}

.field input {
    width: 51px;
    height: 24px;
    background-color: #fff;
    border: none;
    border-bottom: 2px solid #999;
    text-align: center;
}

.field input.blank {
    background-color: #000;
    border: 1px solid #bbb;
    border-bottom: 2px solid #bbb;
}

.group.red input { color: #f5333f; }
.group.green input { color: #3d9a3d; }
.group.blue input { color: #2874d0; }

.summary-side {
    display: flex;
    flex-direction: column;
    align-items: center;
    gap: 4px;
    width: 27px;
    padding-top: 5px;
    background-color: var(--header);
}

.summary-side h2 {
    font-size: 14px;
    writing-mode: vertical-rl;
}

/* Legend */
.legend {
    flex: none;
    height: 37px;
    padding-right: 332px;
    background-color: #fff;
    border-bottom: 1px solid #b4b4bc;
    font-size: 14px;
}

.legend-items {
    display: flex;
    align-items: center;
    height: 36px;
    padding-left: 4px;
    background: linear-gradient(#fff, #efefef);
    border-right: 2px solid #ccc;
}

.grip {
    width: 3px;
    height: 18px;
    margin-right: 5px;
    background: repeating-linear-gradient(#bbb 0 2px, transparent 2px 5px);
}

.legend-item {
    display: flex;
    align-items: center;
    gap: 5px;
}

.legend-item::after {
    content: "";
    width: 1px;
    height: 18px;
    margin-right: 4px;
    margin-left: 4px;
    background-color: #c4c4c4;
}

.swatch {
    width: 18px;
    height: 27px;
    border: 2px solid #aaa;
    border-top: none;
}

.ferias { background-color: #e0d800; }
.afastamento { background-color: #c5bd96; }
.compensado { background-color: #63c8fb; }
.descanso { background-color: #4b96fb; }
.feriado { background-color: #2f66f5; }
.ausencia { background-color: #cdebc8; }
.intervalo { background-color: #aee59a; }
.extra { background-color: #8cf5fb; }
.demitido { background-color: #8f8450; }
```
